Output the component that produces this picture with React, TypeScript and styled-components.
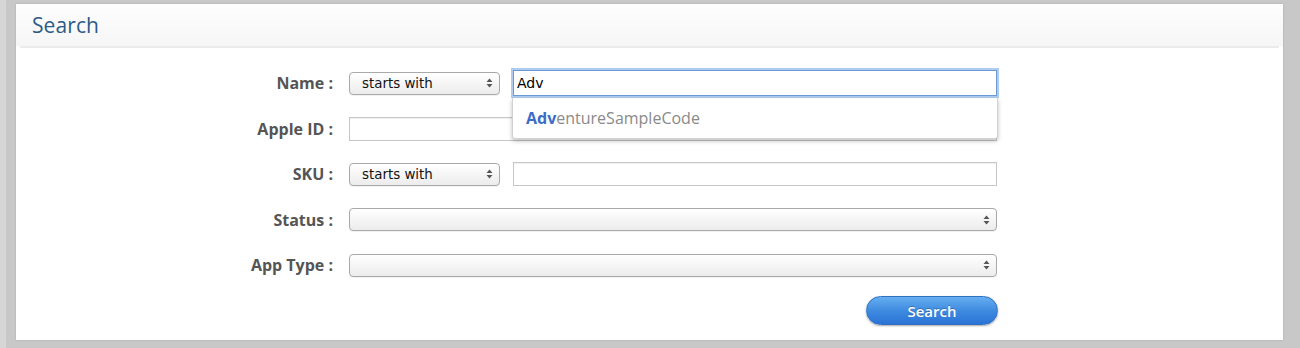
import React from "react";
import styled, { createGlobalStyle } from "styled-components";

const Global = createGlobalStyle`
  html, body { margin: 0; padding: 0; }
  body {
    background: #c9c9c9;
    font-family: "Open Sans", "Liberation Sans", sans-serif;
    width: 1300px;
    height: 348px;
    overflow: hidden;
  }
`;

const Page = styled.div`
  padding: 4px 17px 0 16px;
  height: 348px;
  box-sizing: border-box;
  background: linear-gradient(to right, #d6d6d6 0, #d6d6d6 6px, #c8c8c8 6px);
`;

const Panel = styled.div`
  background: #fff;
  height: 336px;
  box-shadow: 0 0 2px rgba(0, 0, 0, 0.15);
  display: flex;
  flex-direction: column;
`;

const Header = styled.div`
  height: 42px;
  display: flex;
  align-items: center;
  padding-left: 16px;
  background: linear-gradient(to bottom, #fdfdfd, #f6f6f6);
`;

const Title = styled.h1`
  margin: 0;
  font-size: 21px;
  font-weight: 400;
  color: #2c5a86;
  letter-spacing: 0.1px;
`;

const Divider = styled.div`
  height: 2px;
  margin: 0 4px;
  background: #ebebeb;
`;

const Form = styled.div`
  display: grid;
  grid-template-columns: 317px 648px;
  grid-auto-rows: 26px;
  row-gap: 19.5px;
  column-gap: 16px;
  padding-top: 22px;
  align-items: center;
`;

const Label = styled.label`
  text-align: right;
  font-size: 16px;
  font-weight: 700;
  color: #555;
  white-space: nowrap;
`;

const Controls = styled.div`
  display: flex;
  align-items: center;
  gap: 13px;
  height: 100%;
  position: relative;
`;

const SelectBox = styled.div<{ $width?: number }>`
  box-sizing: border-box;
  width: ${(p) => (p.$width ? `${p.$width}px` : "100%")};
  height: 23px;
  border: 1px solid #a9a9a9;
  border-radius: 4px;
  background: linear-gradient(to bottom, #ffffff, #ececec);
  box-shadow: 0 1px 0 rgba(0, 0, 0, 0.05);
  display: flex;
  align-items: center;
  justify-content: space-between;
  padding: 0 6px 0 12px;
  font-family: "DejaVu Sans", "Liberation Sans", sans-serif;
  font-size: 13.4px;
  color: #111;
  flex-shrink: 0;
`;

const Arrows = () => (
  <svg width="7" height="10" viewBox="0 0 7 10">
    <path d="M3.5 0.5 L6.5 4 L0.5 4 Z" fill="#555" />
    <path d="M3.5 9.5 L6.5 6 L0.5 6 Z" fill="#555" />
  </svg>
);

const TextInput = styled.div<{ $focused?: boolean }>`
  box-sizing: border-box;
  flex: 1;
  height: ${(p) => (p.$focused ? "26px" : "24px")};
  border: 1px solid ${(p) => (p.$focused ? "#6b9ad6" : "#c6c6c6")};
  box-shadow: ${(p) =>
    p.$focused
      ? "0 0 0 2px rgba(110, 160, 225, 0.55)"
      : "inset 0 1px 1px rgba(0,0,0,0.06)"};
  background: #fff;
  display: flex;
  align-items: center;
  padding-left: 3px;
  font-family: "DejaVu Sans", "Liberation Sans", sans-serif;
  font-size: 14px;
  color: #000;
  position: relative;
`;

const Suggest = styled.div`
  position: absolute;
  top: 27px;
  left: -2px;
  right: -2px;
  height: 40px;
  background: #fff;
  border: 1px solid #d2d2d2;
  border-top: none;
  border-radius: 0 0 3px 3px;
  box-shadow: 0 2px 4px rgba(0, 0, 0, 0.25);
  display: flex;
  align-items: center;
  padding-left: 13px;
  font-family: "Open Sans", "Liberation Sans", sans-serif;
  font-size: 16px;
  color: #8a8a8a;
  z-index: 2;
`;

const Match = styled.span`
  font-weight: 700;
  color: #3a6cc8;
`;

const ButtonRow = styled.div`
  display: flex;
  justify-content: flex-end;
  align-items: center;
  height: 100%;
`;

const Button = styled.button`
  width: 132px;
  height: 29px;
  border-radius: 15px;
  border: 1px solid #2f6fc2;
  background: linear-gradient(to bottom, #66aef0 0%, #3f8be0 50%, #2a73d6 100%);
  color: #fff;
  font-family: "Open Sans", "Liberation Sans", sans-serif;
  font-size: 15px;
  font-weight: 600;
  text-shadow: 0 -1px 0 rgba(0, 0, 0, 0.25);
  box-shadow: 0 1px 2px rgba(0, 0, 0, 0.35);
  padding: 0;
  margin-right: -1px;
  cursor: pointer;
`;

export default function App() {
  return (
    <>
      <Global />
      <Page>
        <Panel>
          <Header>
            <Title>Search</Title>
          </Header>
          <Divider />
          <Form>
            <Label>Name :</Label>
            <Controls>
              <SelectBox $width={151}>
                <span>starts with</span>
                <Arrows />
              </SelectBox>
              <TextInput $focused>
                Adv
                <Suggest>
                  <Match>Adv</Match>entureSampleCode
                </Suggest>
              </TextInput>
            </Controls>

            <Label>Apple ID :</Label>
            <Controls>
              <TextInput />
            </Controls>

            <Label>SKU :</Label>
            <Controls>
              <SelectBox $width={151}>
                <span>starts with</span>
                <Arrows />
              </SelectBox>
              <TextInput />
            </Controls>

            <Label>Status :</Label>
            <Controls>
              <SelectBox>
                <span />
                <Arrows />
              </SelectBox>
            </Controls>

            <Label>App Type :</Label>
            <Controls>
              <SelectBox>
                <span />
                <Arrows />
              </SelectBox>
            </Controls>

            <span />
            <ButtonRow>
              <Button>Search</Button>
            </ButtonRow>
          </Form>
        </Panel>
      </Page>
    </>
  );
}
